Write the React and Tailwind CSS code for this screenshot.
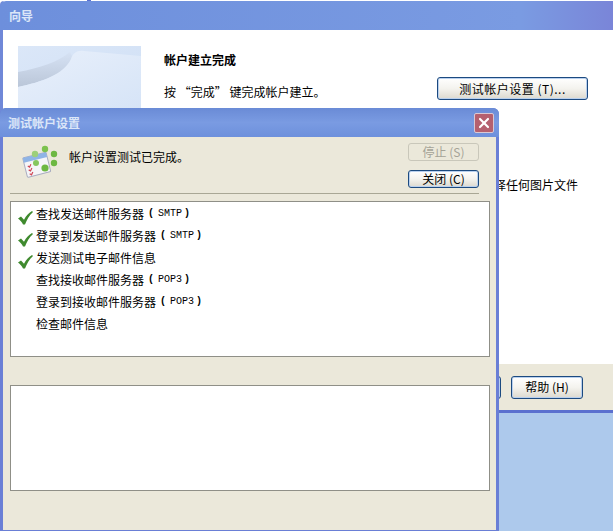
import { X } from 'lucide-react';

const font = { fontFamily: '"Noto Sans CJK SC", sans-serif' };

// Items in the test list, done = green tick on the left
const steps = [
  { label: '查找发送邮件服务器', proto: 'SMTP', done: true },
  { label: '登录到发送邮件服务器', proto: 'SMTP', done: true },
  { label: '发送测试电子邮件信息', done: true },
  { label: '查找接收邮件服务器', proto: 'POP3', done: false },
  { label: '登录到接收邮件服务器', proto: 'POP3', done: false },
  { label: '检查邮件信息', done: false },
];

function XpButton({ children, className = '' }) {
  return (
    <button className={`flex items-center justify-center rounded-[3px] border border-[#1c4a80] bg-gradient-to-b from-white via-[#f4f3ee] to-[#dcd9cf] text-[12px] text-black shadow-[inset_0_0_0_1px_#b9d0ee] ${className}`}>
      {children}
    </button>
  );
}

function TitleBar({ title, children, className = '' }) {
  return (
    <div className={`flex h-[29px] shrink-0 items-center justify-between bg-gradient-to-b from-[#6a8bd6] via-[#7a9be2] to-[#6d90dc] pl-2 ${className}`}>
      <span className="text-[12px] font-bold text-[#dbe6f8]">{title}</span>
      {children}
    </div>
  );
}

function GreenTick() {
  return (
    <svg width="15" height="14" viewBox="0 0 15 14" className="mt-[7px] shrink-0">
      <path d="M0 7.5L3 5.5 6 8.8C8 5 10.5 2 14 0L15 1C11 4.5 9 8.5 7 13.5L5 13.5C4 11 2 9 0 7.5Z" fill="#3f8a2e" />
    </svg>
  );
}

function SettingsIcon() {
  return (
    <svg width="36" height="36" viewBox="0 0 36 36" className="shrink-0">
      <g transform="rotate(-14 14 22)">
        <rect x="3" y="11" width="24" height="20" rx="1" fill="#f5f5f8" stroke="#a9adc0" />
        <rect x="3" y="11" width="24" height="5" fill="#8fb4e6" />
        <path d="M6 20l1.5 1.5 2-2.5M6 24l1.5 1.5 2-2.5M6 28l1.5 1.5 2-2.5" stroke="#d04a58" strokeWidth="1.2" fill="none" />
      </g>
      <circle cx="23" cy="5" r="3.2" fill="#7cc24e" />
      <circle cx="13" cy="10" r="3.2" fill="#9ccf7a" />
      <circle cx="32" cy="10" r="3.2" fill="#6db842" />
      <circle cx="14" cy="19" r="3" fill="#86c65e" />
      <circle cx="32" cy="19" r="3.2" fill="#6db842" />
      <circle cx="23" cy="24" r="3.6" fill="#6db842" />
    </svg>
  );
}

function WizardArt() {
  return (
    <svg width="123" height="62" viewBox="0 0 123 62" className="block shrink-0">
      <defs>
        <linearGradient id="artBg" x1="0" y1="0" x2="1" y2="1">
          <stop offset="0" stopColor="#dbe7f8" />
          <stop offset="1" stopColor="#cfdff5" />
        </linearGradient>
        <linearGradient id="artShadow" x1="0" y1="0" x2="0" y2="1">
          <stop offset="0" stopColor="#d6e2f4" />
          <stop offset="1" stopColor="#bac6d8" />
        </linearGradient>
        <linearGradient id="artPage" x1="0" y1="0" x2="1" y2="1">
          <stop offset="0" stopColor="#e9f0fb" />
          <stop offset="1" stopColor="#d6e4f7" />
        </linearGradient>
      </defs>
      <rect width="123" height="62" fill="url(#artBg)" />
      <path d="M0 26C22 22 40 16 52 6L56 14C46 28 24 36 0 41Z" fill="url(#artShadow)" />
      <path d="M0 41C24 36 46 28 53 13 55 7 59 4 66 5L123 10V62H0Z" fill="url(#artPage)" />
    </svg>
  );
}

export default function App() {
  return (
    <div className="relative h-[531px] w-[613px] overflow-hidden bg-white" style={font}>
      {/* Corner of a window further back */}
      <div className="absolute left-[87px] top-0 h-[1px] w-[4px] bg-[#5b70cf]" />

      {/* Wizard window behind */}
      <div className="absolute left-0 top-[1px] flex w-[613px] flex-col rounded-t-[4px] border-l-[3px] border-[#7088d8]">
        <TitleBar title="向导" className="-ml-[3px] rounded-tl-[6px] !bg-[linear-gradient(90deg,#6d8fdc_0%,#7a9be2_85%,#7a85d8_100%)] pl-[9px]" />
        <div className="flex h-[334px] bg-white pl-[15px] pt-[16px]">
          <WizardArt />
          <div className="flex-1 pl-[23px]">
            <div className="mt-[6px] text-[12px] font-bold leading-4 text-black">帐户建立完成</div>
            <div className="mt-[15px] flex">
              <span className="mt-[1px] text-[12px] leading-4 text-black">按 “完成” 键完成帐户建立。</span>
            </div>
          </div>
          <div className="flex w-[176px] flex-col pt-[31px]">
            <XpButton className="h-[23px] w-[151px] tracking-[0.5px]">测试帐户设置 (T)...</XpButton>
            <div className="-ml-[88px] mt-[77px] w-[229px] text-right text-[12px] leading-4 text-black">选择任何图片文件</div>
          </div>
        </div>
        <div className="flex h-[46px] items-center justify-end gap-[10px] bg-[#ebe8da] pr-[30px]">
          <XpButton className="h-[23px] w-[72px]">完成</XpButton>
          <XpButton className="h-[23px] w-[72px]">帮助 (H)</XpButton>
        </div>
        <div className="h-[3px] bg-[#5b70cf]" />
        <div className="-ml-[3px] h-[121px] bg-[#adc9ec]" />
      </div>

      {/* Test settings dialog on top */}
      <div className="absolute left-0 top-[108px] flex h-[423px] w-[499px] flex-col overflow-hidden rounded-t-[6px] bg-[#6a7fd6] px-[3px] pb-[1px]">
        <TitleBar title="测试帐户设置" className="-mx-[3px] pl-[8px] pr-[5px]">
          <div className="flex h-[20px] w-[20px] items-center justify-center rounded-[2px] border border-[#d9c8d4] bg-[#b5606f]">
            <X size={16} strokeWidth={3.2} color="#ffffff" />
          </div>
        </TitleBar>
        <div className="flex flex-1 flex-col bg-[#ebe8da] pl-[7px] pr-[6px]">
          <div className="mr-[11px] flex h-[57px] shrink-0 border-b border-[#a9a795]">
            <div className="ml-[12px] mt-[7px]">
              <SettingsIcon />
            </div>
            <div className="ml-[11px] mt-[12px] flex-1 text-[12px] leading-4 text-black">帐户设置测试已完成。</div>
            <div className="mt-[6px] flex flex-col gap-[9px]">
              <XpButton className="h-[18px] w-[71px] !border-[#c9c7ba] !bg-none !text-[#a5a397] !shadow-none">停止 (S)</XpButton>
              <XpButton className="h-[18px] w-[71px]">关闭 (C)</XpButton>
            </div>
          </div>
          <div className="mt-[7px] flex h-[156px] flex-col gap-[6px] border border-[#8f8f87] bg-white pl-[7px] pt-[4px]">
            {steps.map((step) => (
              <div key={step.label} className="flex h-[16px] items-center gap-[3px] text-[12px] leading-4 text-black">
                <span className="flex w-[15px]">{step.done && <GreenTick />}</span>
                <span>{step.label}</span>
                {step.proto && (
                  <span className="pl-[1px] font-['Liberation_Mono',monospace] text-[10px]">
                    <span className="font-bold">(</span>
                    <span className="ml-[4px] mr-[2px]">{step.proto}</span>
                    <span className="font-bold">)</span>
                  </span>
                )}
              </div>
            ))}
          </div>
          <div className="mt-[28px] h-[106px] border border-[#8f8f87] bg-white" />
        </div>
      </div>
    </div>
  );
}
